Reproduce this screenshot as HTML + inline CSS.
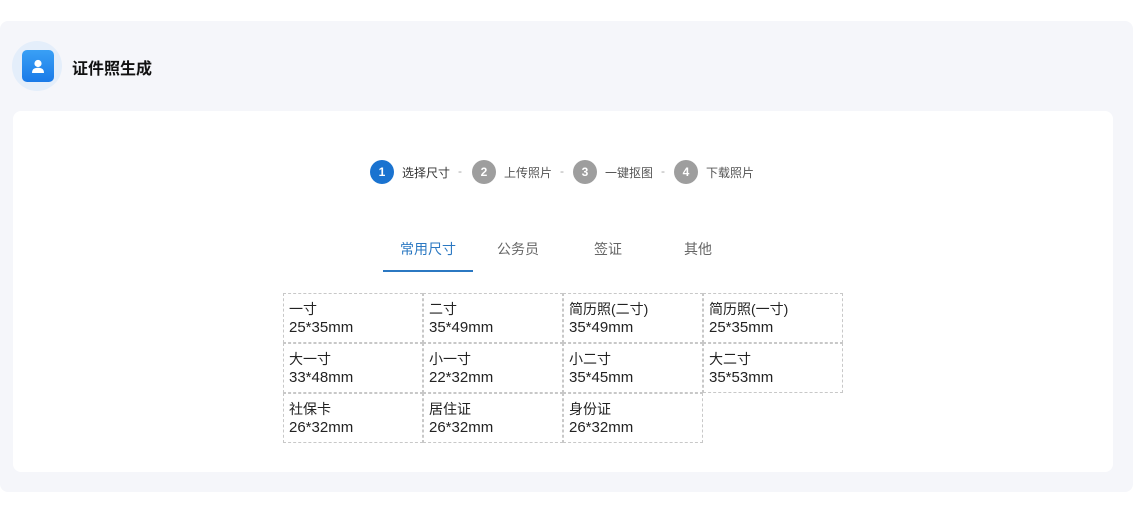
<!DOCTYPE html>
<html><head><meta charset="utf-8"><style>
body{margin:0;width:1141px;height:515px;background:#fff;font-family:"Liberation Sans","Noto Sans CJK SC",sans-serif;position:relative;overflow:hidden}
.panel{position:absolute;left:0;top:21px;width:1133px;height:471px;background:#f5f6fa;border-radius:8px}
.halo{position:absolute;left:12px;top:41px;width:50px;height:50px;border-radius:50%;background:#e4eefa}
.ico{position:absolute;left:22px;top:50px;width:32px;height:32px;border-radius:5px;background:linear-gradient(#3aa0f5,#1a7ae8)}
.title{position:absolute;left:72px;top:55px;font-size:16px;font-weight:bold;color:#111}
.card{position:absolute;left:13px;top:111px;width:1100px;height:361px;background:#fff;border-radius:8px}
.step{position:absolute;top:160px;height:24px;display:flex;align-items:center;font-size:12px;color:#555}
.c{width:24px;height:24px;border-radius:50%;background:#9e9e9e;color:#fff;font-size:12px;font-weight:bold;display:flex;align-items:center;justify-content:center;margin-right:8px}
.sep{position:absolute;top:164px;font-size:12px;color:#aaa}
.tab{position:absolute;top:239px;width:90px;text-align:center;font-size:14px;color:#666}
.cell{position:absolute;width:138px;height:48px;border:1px dashed #c8c8c8;font-size:14px;line-height:18px;color:#222;box-sizing:content-box}
.cell div{margin:6px 0 0 5px}
.cell span{font-size:15px}
</style></head><body>
<div class="panel"></div>
<div class="halo"></div>
<div class="ico"><svg width="32" height="32" viewBox="0 0 32 32"><circle cx="16" cy="13.5" r="3.6" fill="#fff"/><path d="M10 23 Q10 17.8 16 17.8 Q22 17.8 22 23 Z" fill="#fff"/></svg></div>
<div class="title">证件照生成</div>
<div class="card"></div>
<div class="step" style="left:370px;color:#333"><div class="c" style="background:#1a73d0">1</div>选择尺寸</div>
<div class="sep" style="left:458px">-</div>
<div class="step" style="left:472px"><div class="c">2</div>上传照片</div>
<div class="sep" style="left:560px">-</div>
<div class="step" style="left:573px"><div class="c">3</div>一键抠图</div>
<div class="sep" style="left:661px">-</div>
<div class="step" style="left:674px"><div class="c">4</div>下载照片</div>
<div class="tab" style="left:383px;color:#2b78c2">常用尺寸</div>
<div style="position:absolute;left:383px;top:270px;width:90px;height:2px;background:#2b78c2"></div>
<div class="tab" style="left:473px">公务员</div>
<div class="tab" style="left:563px">签证</div>
<div class="tab" style="left:653px">其他</div>
<div class="cell" style="left:283px;top:293px"><div>一寸<br><span>25*35mm</span></div></div>
<div class="cell" style="left:423px;top:293px"><div>二寸<br><span>35*49mm</span></div></div>
<div class="cell" style="left:563px;top:293px"><div>简历照(二寸)<br><span>35*49mm</span></div></div>
<div class="cell" style="left:703px;top:293px"><div>简历照(一寸)<br><span>25*35mm</span></div></div>
<div class="cell" style="left:283px;top:343px"><div>大一寸<br><span>33*48mm</span></div></div>
<div class="cell" style="left:423px;top:343px"><div>小一寸<br><span>22*32mm</span></div></div>
<div class="cell" style="left:563px;top:343px"><div>小二寸<br><span>35*45mm</span></div></div>
<div class="cell" style="left:703px;top:343px"><div>大二寸<br><span>35*53mm</span></div></div>
<div class="cell" style="left:283px;top:393px"><div>社保卡<br><span>26*32mm</span></div></div>
<div class="cell" style="left:423px;top:393px"><div>居住证<br><span>26*32mm</span></div></div>
<div class="cell" style="left:563px;top:393px"><div>身份证<br><span>26*32mm</span></div></div>
</body></html>
